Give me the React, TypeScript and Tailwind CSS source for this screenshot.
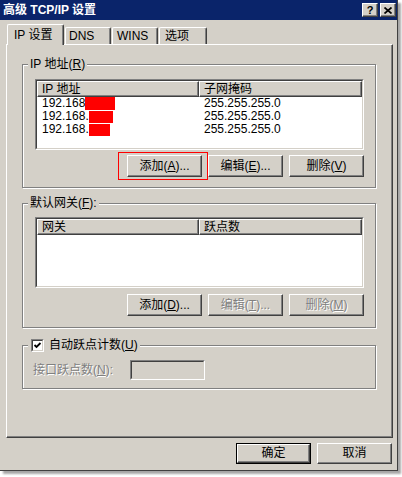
import React from "react";

const font = "font-['Liberation_Sans','Noto_Sans_CJK_SC',sans-serif]";
const raised =
  "border border-t-white border-l-white border-r-[#404040] border-b-[#404040] shadow-[inset_-1px_-1px_0_#808080]";
const disabledText = "text-[#808080] [text-shadow:1px_1px_0_#fff]";

function Btn({
  children,
  disabled,
  h = "h-[22px]",
}: {
  children: React.ReactNode;
  disabled?: boolean;
  h?: string;
}) {
  return (
    <div
      className={`${raised} ${h} w-[75px] bg-[#D4D0C8] flex items-center justify-center text-[12px] leading-[13px] ${
        disabled ? disabledText : "text-black"
      }`}
    >
      {children}
    </div>
  );
}

function Group({
  label,
  labelTop = "top-[-7px]",
  className = "",
  children,
}: {
  label: React.ReactNode;
  labelTop?: string;
  className?: string;
  children: React.ReactNode;
}) {
  return (
    <div
      className={`relative w-[354px] border border-[#808080] shadow-[inset_1px_1px_0_#fff,1px_1px_0_#fff] ${className}`}
    >
      <div
        className={`absolute left-[5px] ${labelTop} bg-[#D4D0C8] px-[2px] flex items-center text-[12px] leading-[13px]`}
      >
        {label}
      </div>
      {children}
    </div>
  );
}

function ListView({
  cols,
  rows,
}: {
  cols: [string, string];
  rows: React.ReactNode[][];
}) {
  return (
    <div className="ml-[12px] w-[329px] h-[71px] border border-t-[#808080] border-l-[#808080] border-r-white border-b-white">
      <div className="h-full bg-white border border-t-[#404040] border-l-[#404040] border-r-[#D4D0C8] border-b-[#D4D0C8] flex flex-col overflow-hidden">
        <div className="flex h-[16px] shrink-0">
          <div className={`${raised} w-[162px] bg-[#D4D0C8] pl-[4px] text-[12px] leading-[13px] flex items-center`}>
            {cols[0]}
          </div>
          <div className={`${raised} w-[163px] bg-[#D4D0C8] pl-[4px] text-[12px] leading-[13px] flex items-center`}>
            {cols[1]}
          </div>
        </div>
        {rows.map((r, i) => (
          <div key={i} className="flex h-[13px] items-center text-[12px] leading-[13px]">
            <div className="w-[162px] pl-[5px] flex items-center">{r[0]}</div>
            <div className="pl-[5px]">{r[1]}</div>
          </div>
        ))}
      </div>
    </div>
  );
}

function Acc({ k }: { k: string }) {
  return (
    <>
      (<u>{k}</u>)
    </>
  );
}

export default function App() {
  const mask = (w: string) => <span className={`inline-block ${w} bg-[#ff0000]`} />;

  return (
    <div className={`w-[402px] h-[477px] bg-white ${font} text-black`}>
      <div className="w-[398px] h-[471px] bg-[#D4D0C8] border-r border-b border-[#404040] shadow-[3px_3px_2px_rgba(0,0,0,0.35)] flex flex-col">
        {/* Title bar */}
        <div className="h-[20px] bg-[#0A246A] flex items-center justify-between pl-[3px] pr-[1px] shrink-0">
          <span className="text-white font-bold text-[12px] leading-[14px]">高级 TCP/IP 设置</span>
          <div className="flex gap-[2px]">
            <div className={`${raised} w-[16px] h-[14px] bg-[#D4D0C8] flex items-center justify-center text-[11px] font-bold leading-none`}>
              ?
            </div>
            <div className={`${raised} w-[16px] h-[14px] bg-[#D4D0C8] flex items-center justify-center`}>
              <svg width="8" height="7" viewBox="0 0 8 7">
                <path d="M0.5 0.5 L7.5 6.5 M7.5 0.5 L0.5 6.5" stroke="black" strokeWidth="1.7" />
              </svg>
            </div>
          </div>
        </div>

        <div className="px-[6px] flex flex-col">
          {/* Tabs */}
          <div className="h-[24px] flex items-end ml-[1px] text-[12px] leading-[13px]">
            <div className="relative z-10 -mb-[1px] h-[21px] w-[57px] bg-[#D4D0C8] rounded-t-[2px] border-t border-l border-white border-r border-r-[#404040] shadow-[inset_-1px_0_0_#808080] pl-[6px] flex items-center">
              IP 设置
            </div>
            <div className="h-[17px] w-[46px] ml-[1px] rounded-t-[2px] border-t border-l border-white border-r border-r-[#404040] shadow-[inset_-1px_0_0_#808080] pl-[3px] flex items-center">
              DNS
            </div>
            <div className="h-[17px] w-[46px] ml-[1px] rounded-t-[2px] border-t border-l border-white border-r border-r-[#404040] shadow-[inset_-1px_0_0_#808080] pl-[4px] flex items-center">
              WINS
            </div>
            <div className="h-[17px] w-[48px] ml-[1px] rounded-t-[2px] border-t border-l border-white border-r border-r-[#404040] shadow-[inset_-1px_0_0_#808080] pl-[5px] flex items-center">
              选项
            </div>
          </div>

          {/* Panel */}
          <div className="w-[387px] h-[394px] border-t border-l border-white border-r border-b border-r-[#404040] border-b-[#404040] shadow-[inset_-1px_-1px_0_#808080] pl-[15px] flex flex-col">
            <Group label={<>IP 地址<Acc k="R" /></>} className="mt-[19px] pt-[14px] pb-[10px]">
              <ListView
                cols={["IP 地址", "子网掩码"]}
                rows={[
                  [<>192.168{mask("w-[30px] h-[13px]")}</>, "255.255.255.0"],
                  [<>192.168.{mask("w-[24px] h-[12px]")}</>, "255.255.255.0"],
                  [<>192.168.{mask("w-[21px] h-[12px]")}</>, "255.255.255.0"],
                ]}
              />
              <div className="mt-[5px] ml-[104px] flex gap-[6px]">
                <div className="relative">
                  <Btn>
                    添加<Acc k="A" />...
                  </Btn>
                  <div className="absolute -left-[9px] -top-[3px] w-[90px] h-[28px] border border-[#ff0000]" />
                </div>
                <Btn>
                  编辑<Acc k="E" />...
                </Btn>
                <Btn>
                  删除<Acc k="V" />
                </Btn>
              </div>
            </Group>

            <Group label={<>默认网关<Acc k="F" />:</>} className="mt-[15px] pt-[13px] pb-[11px]">
              <ListView cols={["网关", "跃点数"]} rows={[]} />
              <div className="mt-[6px] ml-[104px] flex gap-[6px]">
                <Btn>
                  添加<Acc k="D" />...
                </Btn>
                <Btn disabled>
                  编辑<Acc k="T" />...
                </Btn>
                <Btn disabled>
                  删除<Acc k="M" />
                </Btn>
              </div>
            </Group>

            <Group
              labelTop="top-[-7px]"
              label={
                <span className="flex items-center gap-[5px] ml-[1px]">
                  <span className="w-[13px] h-[13px] border border-t-[#808080] border-l-[#808080] border-r-white border-b-white">
                    <span className="block w-full h-full bg-white border border-t-[#404040] border-l-[#404040] border-r-[#D4D0C8] border-b-[#D4D0C8]">
                      <svg width="9" height="9" viewBox="0 0 9 9" className="block">
                        <path d="M1.5 4 L3.5 6 L7.5 2" stroke="black" strokeWidth="1.8" fill="none" />
                      </svg>
                    </span>
                  </span>
                  <span>
                    自动跃点计数<Acc k="U" />
                  </span>
                </span>
              }
              className="mt-[17px] pt-[14px] pb-[8px]"
            >
              <div className="flex items-center pl-[10px] text-[12px] leading-[13px]">
                <span className={`w-[97px] ${disabledText}`}>
                  接口跃点数<Acc k="N" />:
                </span>
                <div className="w-[75px] h-[20px] border border-t-[#808080] border-l-[#808080] border-r-white border-b-white">
                  <div className="h-full border border-t-[#404040] border-l-[#404040] border-r-[#D4D0C8] border-b-[#D4D0C8]" />
                </div>
              </div>
            </Group>
          </div>

          {/* Footer */}
          <div className="w-[387px] mt-[5px] pr-[1px] flex justify-end gap-[6px]">
            <div className="w-[75px] h-[21px] border border-black">
              <div className={`${raised} h-full bg-[#D4D0C8] flex items-center justify-center text-[12px] leading-[13px]`}>
                确定
              </div>
            </div>
            <Btn h="h-[21px]">取消</Btn>
          </div>
        </div>
      </div>
    </div>
  );
}
